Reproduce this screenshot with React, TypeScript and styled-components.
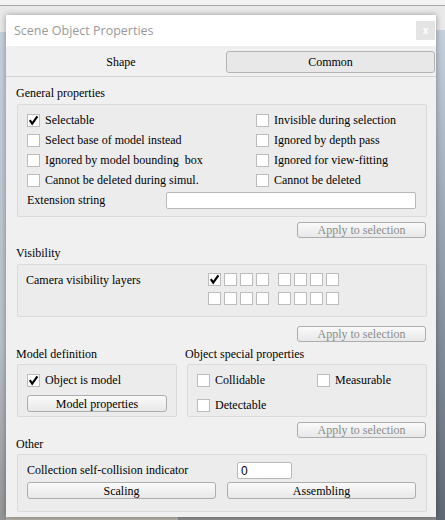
import React from "react";
import styled, { createGlobalStyle } from "styled-components";

const Global = createGlobalStyle`
  html, body { margin: 0; padding: 0; }
  body { font-family: "Liberation Serif", "Times New Roman", serif; font-size: 12px; color: #000; }
  * { box-sizing: border-box; }
`;

const Desktop = styled.div`
  width: 445px;
  height: 520px;
  overflow: hidden;
  padding: 15px 9px 3px 6px;
  background:
    linear-gradient(#a9a9a9, #a9a9a9) 0 5px / 100% 1px no-repeat,
    linear-gradient(#c7d1dc, #b9c1c9 60%, #8e8e8e) 0 32px / 6px 100% no-repeat,
    linear-gradient(#c5d0dc, #8f99a6 50%, #59616d) 436px 30px / 9px 100% no-repeat,
    linear-gradient(90deg, #b8b3ab 0 40%, #8f8f8f 40% 100%) 0 517px / 100% 3px no-repeat,
    linear-gradient(#f3f3f3 0 5px, #e9e9e9 6px 100%);
`;

const Dialog = styled.div`
  width: 430px;
  height: 502px;
  background: #f0f0f0;
  display: flex;
  flex-direction: column;
  box-shadow: 0 0 6px rgba(0, 0, 0, 0.35);
`;

const TitleBar = styled.div`
  height: 31px;
  background: #fff;
  display: flex;
  align-items: center;
  justify-content: space-between;
  padding: 0 1px 0 8px;
`;

const Title = styled.div`
  font-family: "Open Sans", "Noto Sans", sans-serif;
  font-size: 12.5px;
  color: #9a9a9a;
`;

const CloseBtn = styled.div`
  width: 19px;
  height: 19px;
  background: #e4e4e4;
  color: #fff;
  font-family: "Liberation Sans", sans-serif;
  font-size: 10px;
  font-weight: bold;
  display: flex;
  align-items: center;
  justify-content: center;
`;

const TabBar = styled.div`
  height: 31px;
  display: grid;
  grid-template-columns: 220px 1fr;
  border-bottom: 1px solid #d2d2d2;
  padding: 5px 1px 3px 0;
`;

const Tab = styled.div<{ $active?: boolean }>`
  display: flex;
  align-items: center;
  justify-content: center;
  font-size: 12px;
  padding-left: ${(p) => (p.$active ? "0" : "10px")};
  border: 1px solid ${(p) => (p.$active ? "#b4b4b4" : "transparent")};
  border-radius: 3px;
  background: ${(p) => (p.$active ? "#e8e8e8" : "transparent")};
`;

const Body = styled.div`
  display: flex;
  flex-direction: column;
  padding: 0 9px 0 11px;
`;

const SectionLabel = styled.div<{ $mt: number; $w?: number }>`
  height: 12px;
  line-height: 12px;
  margin-top: ${(p) => p.$mt}px;
  margin-left: -1px;
  white-space: nowrap;
  ${(p) => (p.$w ? `width: ${p.$w}px;` : "")}
`;

const Group = styled.div<{ $mt: number; $h: number }>`
  margin-top: ${(p) => p.$mt}px;
  height: ${(p) => p.$h}px;
  border: 1px solid #dadada;
  border-radius: 2px;
  background: #ececec;
`;

const Btn = styled.div<{ $disabled?: boolean }>`
  height: 17px;
  border: 1px solid #adadad;
  border-radius: 3px;
  background: linear-gradient(#fafafa, #e8e8e8);
  color: ${(p) => (p.$disabled ? "#8c8c8c" : "#000")};
  display: flex;
  align-items: center;
  justify-content: center;
  font-size: 12px;
  line-height: 1;
  white-space: nowrap;
`;

const ApplyBtn = styled(Btn)<{ $mt: number }>`
  width: 129px;
  height: 16px;
  align-self: flex-end;
  margin-right: 1px;
  margin-top: ${(p) => p.$mt}px;
`;

const Box = styled.span`
  width: 13px;
  height: 13px;
  flex: none;
  background: #fff;
  border: 1px solid #bcbcbc;
  display: flex;
  align-items: center;
  justify-content: center;
`;

const CheckRow = styled.div`
  height: 20px;
  display: flex;
  align-items: center;
  gap: 5px;
  white-space: pre;
`;

const Input = styled.div<{ $w: number }>`
  width: ${(p) => p.$w}px;
  height: 17px;
  background: #fff;
  border: 1px solid #b9b9b9;
  border-radius: 2px;
  padding-left: 3px;
  display: flex;
  align-items: center;
  font-family: "Liberation Sans", sans-serif;
  font-size: 12px;
`;

const GeneralGrid = styled.div`
  display: grid;
  grid-template-columns: 229px 1fr;
  padding: 5px 10px 0 9px;
`;

const ExtRow = styled.div`
  grid-column: 1 / span 2;
  height: 20px;
  display: flex;
  align-items: center;
  justify-content: space-between;
`;

const VisRow = styled.div`
  display: flex;
  padding: 8px 0 0 8px;
`;

const VisLabel = styled.div`
  width: 182px;
  line-height: 14px;
`;

const LayerGrid = styled.div`
  display: flex;
  flex-direction: column;
  gap: 6px;
`;

const LayerRow = styled.div`
  display: flex;
  gap: 9px;
`;

const LayerQuad = styled.div`
  display: flex;
  gap: 3px;
`;

const SplitRow = styled.div<{ $mt: number }>`
  display: flex;
  gap: 10px;
  margin-top: ${(p) => p.$mt}px;
`;

const ModelGroup = styled(Group)`
  width: 160px;
  padding: 5px 0 0 9px;
  display: flex;
  flex-direction: column;
`;

const SpecialGroup = styled(Group)`
  flex: 1;
  display: grid;
  grid-template-columns: 120px 1fr;
  grid-auto-rows: 20px;
  row-gap: 5px;
  padding: 5px 0 0 9px;
`;

const ModelBtn = styled(Btn)`
  width: 140px;
  margin-top: 5px;
`;

const OtherGroup = styled(Group)`
  padding: 7px 10px 0 9px;
  display: flex;
  flex-direction: column;
  gap: 3px;
`;

const OtherRow = styled.div`
  display: flex;
  align-items: center;
  height: 17px;
`;

const OtherLabel = styled.div`
  width: 210px;
`;

const BtnRow = styled.div`
  display: grid;
  grid-template-columns: 1fr 1fr;
  gap: 11px;
`;

const Tick = () => (
  <svg width="11" height="11" viewBox="0 0 11 11">
    <path d="M1.8 5.2 L4.2 8.6 L9.4 1.4" fill="none" stroke="#000" strokeWidth="2.1" />
  </svg>
);

const Check = ({ label, checked }: { label?: string; checked?: boolean }) => (
  <CheckRow>
    <Box>{checked && <Tick />}</Box>
    {label && <span>{label}</span>}
  </CheckRow>
);

const Quad = ({ first }: { first?: boolean }) => (
  <LayerQuad>
    {[0, 1, 2, 3].map((i) => (
      <Box key={i}>{first && i === 0 && <Tick />}</Box>
    ))}
  </LayerQuad>
);

export default function App() {
  return (
    <>
      <Global />
      <Desktop>
        <Dialog>
          <TitleBar>
            <Title>Scene Object Properties</Title>
            <CloseBtn>x</CloseBtn>
          </TitleBar>
          <TabBar>
            <Tab>Shape</Tab>
            <Tab $active>Common</Tab>
          </TabBar>
          <Body>
            <SectionLabel $mt={10}>General properties</SectionLabel>
            <Group $mt={5} $h={113}>
              <GeneralGrid>
                <Check label="Selectable" checked />
                <Check label="Invisible during selection" />
                <Check label="Select base of model instead" />
                <Check label="Ignored by depth pass" />
                <Check label="Ignored by model bounding  box" />
                <Check label="Ignored for view-fitting" />
                <Check label="Cannot be deleted during simul." />
                <Check label="Cannot be deleted" />
                <ExtRow>
                  <span>Extension string</span>
                  <Input $w={250} />
                </ExtRow>
              </GeneralGrid>
            </Group>
            <ApplyBtn $mt={5} $disabled>Apply to selection</ApplyBtn>

            <SectionLabel $mt={9}>Visibility</SectionLabel>
            <Group $mt={5} $h={53}>
              <VisRow>
                <VisLabel>Camera visibility layers</VisLabel>
                <LayerGrid>
                  <LayerRow>
                    <Quad first />
                    <Quad />
                  </LayerRow>
                  <LayerRow>
                    <Quad />
                    <Quad />
                  </LayerRow>
                </LayerGrid>
              </VisRow>
            </Group>
            <ApplyBtn $mt={9} $disabled>Apply to selection</ApplyBtn>

            <SplitRow $mt={6}>
              <SectionLabel $mt={0} $w={160}>Model definition</SectionLabel>
              <SectionLabel $mt={0}>Object special properties</SectionLabel>
            </SplitRow>
            <SplitRow $mt={4}>
              <ModelGroup $mt={0} $h={53}>
                <Check label="Object is model" checked />
                <ModelBtn>Model properties</ModelBtn>
              </ModelGroup>
              <SpecialGroup $mt={0} $h={53}>
                <Check label="Collidable" />
                <Check label="Measurable" />
                <Check label="Detectable" />
              </SpecialGroup>
            </SplitRow>
            <ApplyBtn $mt={5} $disabled>Apply to selection</ApplyBtn>

            <SectionLabel $mt={0}>Other</SectionLabel>
            <OtherGroup $mt={4} $h={58}>
              <OtherRow>
                <OtherLabel>Collection self-collision indicator</OtherLabel>
                <Input $w={55}>0</Input>
              </OtherRow>
              <BtnRow>
                <Btn>Scaling</Btn>
                <Btn>Assembling</Btn>
              </BtnRow>
            </OtherGroup>
          </Body>
        </Dialog>
      </Desktop>
    </>
  );
}
